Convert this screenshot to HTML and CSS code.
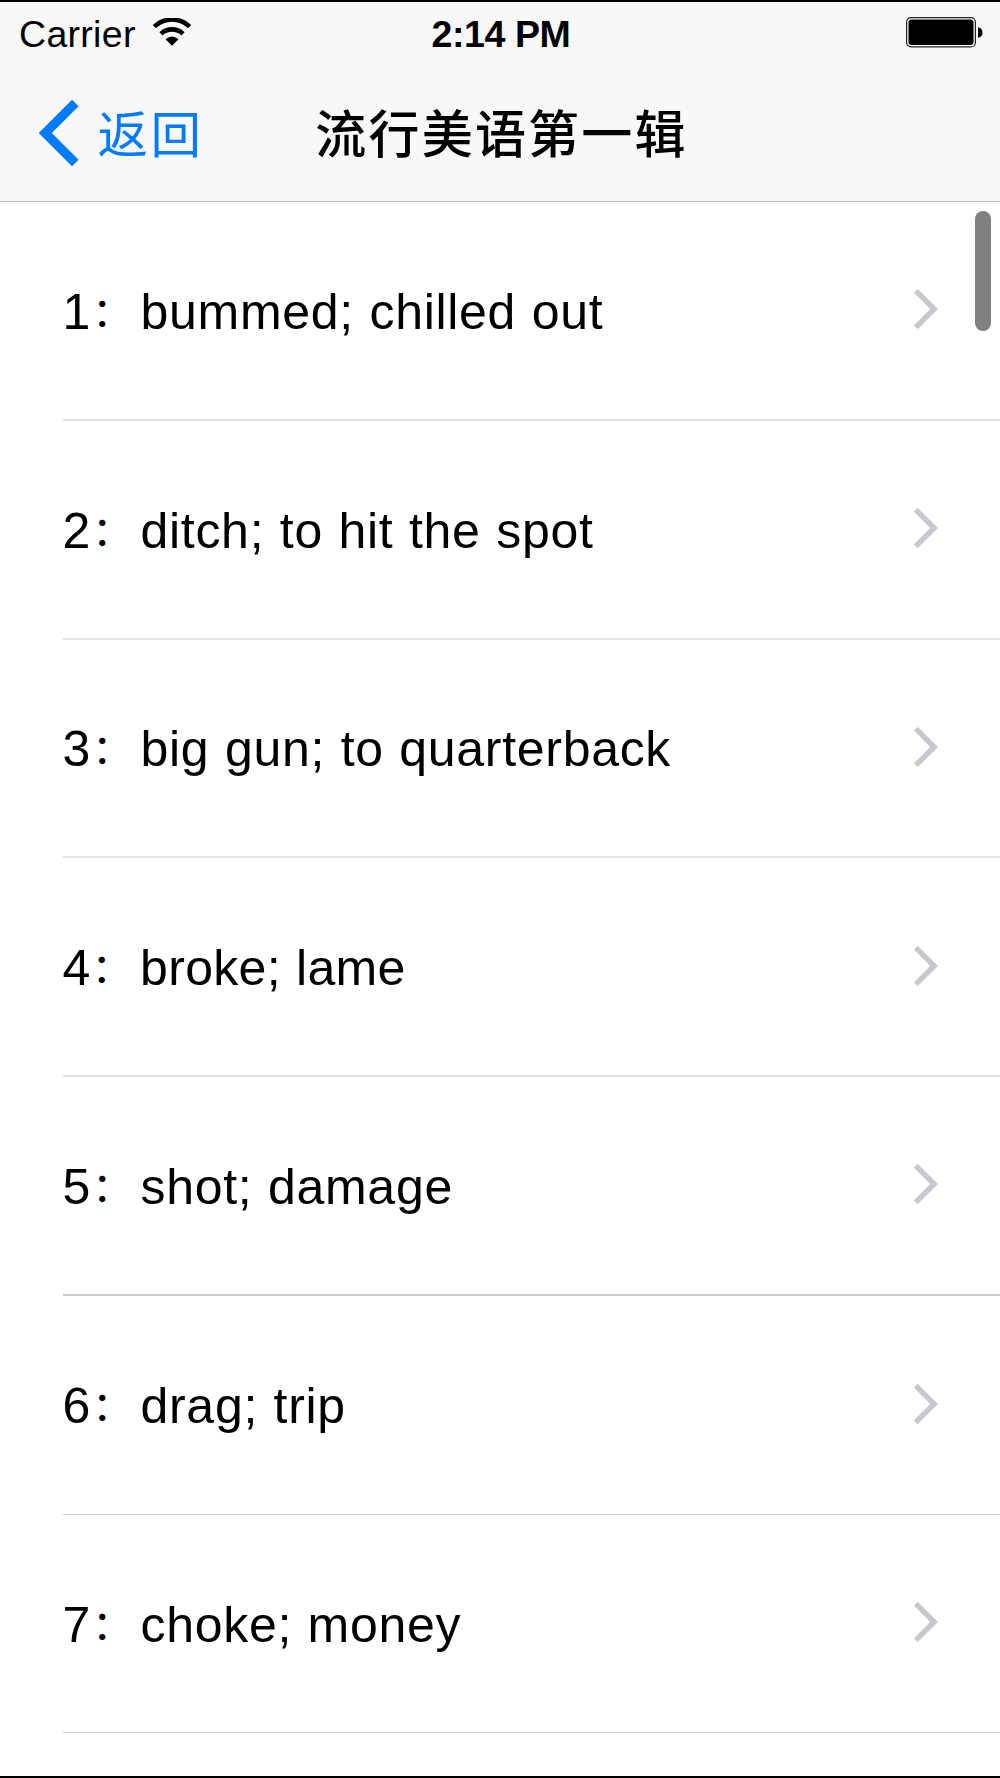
FILE: index.html
```html
<!DOCTYPE html>
<html lang="zh-CN">
<head>
<meta charset="utf-8">
<title>流行美语第一辑</title>
<link rel="stylesheet" href="styles.css">
</head>
<body>
<svg class="defs" width="0" height="0"><symbol id="chev" viewBox="0 0 24 40"><path d="M1.8 1.8 20.2 20 1.8 38.200" fill="none" stroke="#c7c7cc" stroke-width="5.400"/></symbol></svg>
<main class="screen">
  <header class="top">
    <div class="status">
      <div class="carrier"><span>Carrier</span>
        <svg class="wifi" width="38" height="28" viewBox="0 0 38 28"><path d="M1.300 8.700A25.500 25.500 0 0 1 36.700 8.700M8 15.800A16 16 0 0 1 30 15.800" fill="none" stroke="#000" stroke-width="4.600"/><path d="M12.500 21.200Q19 16 25.500 21.200L19 27.800Z"/></svg>
      </div>
      <time class="time">2:14 PM</time>
      <svg class="battery" width="77" height="31" viewBox="0 0 77 31"><rect x=".6" y=".6" width="68.800" height="29.300" rx="4.500" fill="none" stroke="#222" stroke-width="1.200"/><rect x="2.500" y="2.500" width="65" height="25.500" rx="3"/><path d="M72 10.200Q76.500 11 76.500 15.500T72 20.800Z"/></svg>
    </div>
    <nav class="nav">
      <a class="back"><svg width="40" height="66" viewBox="0 0 40 66"><path d="M36.300 3 6.300 33 36.300 63" fill="none" stroke="#007aff" stroke-width="9.200"/></svg><span class="label">返回</span></a>
      <h1 class="title">流行美语第一辑</h1>
    </nav>
  </header>
  <ul class="list">
    <li class="row"><span class="text">1<span class="colon">：</span>bummed; chilled out</span><svg class="chev"><use href="#chev"/></svg></li>
    <li class="row"><span class="text">2<span class="colon">：</span>ditch; to hit the spot</span><svg class="chev"><use href="#chev"/></svg></li>
    <li class="row"><span class="text">3<span class="colon">：</span>big gun; to quarterback</span><svg class="chev"><use href="#chev"/></svg></li>
    <li class="row"><span class="text tight">4<span class="colon">：</span>broke; lame</span><svg class="chev"><use href="#chev"/></svg></li>
    <li class="row strong"><span class="text">5<span class="colon">：</span>shot; damage</span><svg class="chev"><use href="#chev"/></svg></li>
    <li class="row thin"><span class="text">6<span class="colon">：</span>drag; trip</span><svg class="chev"><use href="#chev"/></svg></li>
    <li class="row thin"><span class="text">7<span class="colon">：</span>choke; money</span><svg class="chev"><use href="#chev"/></svg></li>
  </ul>
  <div class="scrollbar"></div>
</main>
</body>
</html>
```
FILE: styles.css
```css
* { box-sizing: border-box; }
body { margin: 0; background: #fff; }
.defs { position: absolute; }
.screen {
  position: relative;
  width: 1000px;
  height: 1778px;
  overflow: hidden;
  border-top: 2px solid #000;
  border-bottom: 2px solid #000;
  font-family: "Liberation Sans", "Noto Sans CJK SC", sans-serif;
  color: #000;
}
.top {
  height: 200px;
  background: #f8f8f8;
  border-bottom: 1px solid #bdbdbd;
}
.status {
  display: grid;
  grid-template-columns: 1fr auto 1fr;
  height: 62px;
  padding: 0 17px 0 19px;
  align-items: center;
  font-size: 37.5px;
  line-height: 60px;
}
.carrier { display: flex; align-items: center; gap: 17px; padding-top: 1px; letter-spacing: 0.3px; }
.wifi { margin-bottom: 3px; }
.time { padding-top: 1px; font-weight: 700; letter-spacing: -0.4px; }
.battery { justify-self: end; margin-bottom: 1px; }
.nav {
  display: grid;
  grid-template-columns: 1fr auto 1fr;
  align-items: center;
  height: 138px;
  padding: 0 0 0 39px;
}
.back { display: flex; align-items: center; gap: 18.5px; color: #007aff; }
.label { padding-top: 5px; font-size: 50.5px; line-height: 66px; letter-spacing: 2.4px; }
.title { margin: 0 36px 0 0; padding-top: 5px; font-size: 51px; font-weight: 500; line-height: 66px; letter-spacing: 2.2px; }
.list { margin: 0; padding: 0 0 0 63px; list-style: none; }
.row {
  display: flex;
  align-items: center;
  justify-content: space-between;
  height: 218.75px;
  padding-right: 62.5px;
  border-bottom: 2px solid #e4e4e6;
  font-size: 50px;
  line-height: 60px;
}
.strong { border-bottom-color: #cbcbcd; }
.thin { border-bottom: 1px solid #cfcfd3; }
.text { margin-left: -0.5px; padding-top: 3px; letter-spacing: 0.7px; word-spacing: 1px; }
.tight { letter-spacing: 0.3px; }
.colon {
  display: inline-block;
  width: 49.5px;
  padding-left: 1px;
  font-size: 41px;
  line-height: 50px;
  transform: translateY(-2px);
}
.chev { width: 24px; height: 40px; margin-bottom: 2px; }
.scrollbar {
  position: absolute;
  top: 208.5px;
  right: 9.5px;
  width: 16px;
  height: 120.5px;
  border-radius: 8px;
  background: #808080;
}
```
